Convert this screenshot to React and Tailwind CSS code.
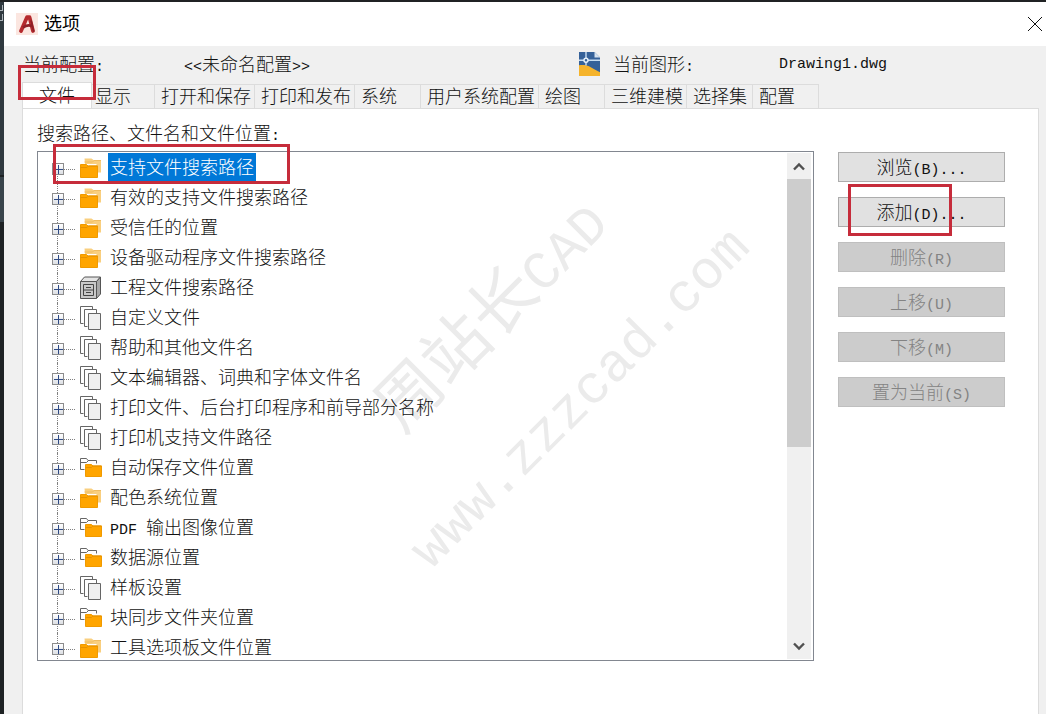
import React from 'react';

const TABS = ['显示', '打开和保存', '打印和发布', '系统', '用户系统配置', '绘图', '三维建模', '选择集', '配置'];

const TREE_ITEMS = [
  { label: '支持文件搜索路径', icon: 'folders', selected: true },
  { label: '有效的支持文件搜索路径', icon: 'folders' },
  { label: '受信任的位置', icon: 'folders' },
  { label: '设备驱动程序文件搜索路径', icon: 'folders' },
  { label: '工程文件搜索路径', icon: 'cabinet' },
  { label: '自定义文件', icon: 'pages' },
  { label: '帮助和其他文件名', icon: 'pages' },
  { label: '文本编辑器、词典和字体文件名', icon: 'pages' },
  { label: '打印文件、后台打印程序和前导部分名称', icon: 'pages' },
  { label: '打印机支持文件路径', icon: 'pages' },
  { label: '自动保存文件位置', icon: 'folderOutline' },
  { label: '配色系统位置', icon: 'folders' },
  { prefix: 'PDF', label: '输出图像位置', icon: 'folderOutline' },
  { label: '数据源位置', icon: 'folderOutline' },
  { label: '样板设置', icon: 'pages' },
  { label: '块同步文件夹位置', icon: 'folderOutline' },
  { label: '工具选项板文件位置', icon: 'folders' },
];

const ACTIONS = [
  { label: '浏览', suffix: '(B)...' },
  { label: '添加', suffix: '(D)...', marked: true },
  { label: '删除', suffix: '(R)', disabled: true },
  { label: '上移', suffix: '(U)', disabled: true },
  { label: '下移', suffix: '(M)', disabled: true },
  { label: '置为当前', suffix: '(S)', disabled: true },
];

// Half-width characters: two of them take the room of one Chinese character
function Latin({ children }) {
  return <span className="font-['Liberation_Mono',monospace] text-[15px] leading-none whitespace-pre">{children}</span>;
}

function AppLogo() {
  return (
    <svg width="22" height="22" viewBox="0 0 22 22" aria-hidden="true">
      <rect width="22" height="22" fill="#fbe6e0" />
      <path d="M5 18 11 4.200h2.500L17 18" fill="none" stroke="#b52a2e" strokeWidth="3.800" strokeLinejoin="round" strokeLinecap="round" />
      <path d="M7 14.500c3-2.200 6-2.600 9-1.500" fill="none" stroke="#8f1f26" strokeWidth="2.600" />
      <path d="M15.200 8 17.600 18" fill="none" stroke="#8f1f26" strokeWidth="1.600" strokeLinecap="round" />
    </svg>
  );
}

function DwgLogo() {
  return (
    <svg width="22" height="24" viewBox="0 0 22 24" aria-hidden="true">
      <path d="M0 0h15.500L21 5.500V24H0z" fill="#356199" />
      <path d="M15.500 0v5.500H21z" fill="#d5e2ef" />
      <path d="M0 13.200c3.500-.4 7-.4 10 1 3.500 1.800 7 4 11 6V24H0z" fill="#f5b32b" />
      <path d="M0 8.200h21M7 0v13.500" stroke="#c9def2" strokeWidth="1.400" />
      <circle cx="7" cy="8.200" r="2" fill="#356199" stroke="#e8f2fb" strokeWidth="1.400" />
    </svg>
  );
}

function TreeIcon({ type }) {
  return (
    <svg className="mt-[3px] shrink-0" width="22" height="24" viewBox="0 0 22 24" aria-hidden="true">
      {type === 'folders' && (
        <>
          <path d="M4.500 2.500h7l2 1.500H21v12.500h-4.500V8H5z" fill="#f9cf7f" />
          <path d="M4.500 6h8l1.500-1.500h7" fill="none" stroke="#f0bd62" />
          <path d="M.5 8.500h6L8 10h9.500v11.500H.5z" fill="#ffa500" stroke="#f09a00" />
          <path d="M.5 11.500H7L8.500 10h9" fill="none" stroke="#e69200" />
        </>
      )}
      {type === 'cabinet' && (
        <>
          <path d="M.5 5.500 4.500 1h16l-4 4.500z" fill="#e4e4e4" stroke="#555" />
          <path d="m16.500 5.500 4-4.500v17l-4 4.500z" fill="#a8a8a8" stroke="#555" />
          <path d="M.5 5.500h16v17H.5z" fill="#c9c9c9" stroke="#555" />
          <path d="M3.500 8.500h10v11h-10zM3.500 14h10M6 11.500h5M6 16.500h5" fill="none" stroke="#444" />
        </>
      )}
      {type === 'pages' && (
        <>
          <path d="M3.500 17.500h-3V.5h12v3" fill="none" stroke="#666" />
          <path d="M7.500 20.500h-3v-17h12v4" fill="none" stroke="#666" />
          <path d="M8.500 7.500h12v16h-12z" fill="#f0f0f0" stroke="#666" />
        </>
      )}
      {type === 'folderOutline' && (
        <>
          <path d="M4.500 13.500h-4V2.500h6l1.500 2h8.500v3M.5 6.500h6l2-2" fill="none" stroke="#666" />
          <path d="M5.500 8.500h6L13 10h8.500v10.500h-16z" fill="#ffa500" stroke="#f09a00" />
          <path d="M5.500 11.500h6L13 10h8.500" fill="none" stroke="#e69200" />
        </>
      )}
    </svg>
  );
}

function Chevron({ down }) {
  return (
    <svg width="12" height="9" viewBox="0 0 12 9" aria-hidden="true">
      <path d={down ? 'm1 1.500 5 5 5-5' : 'm1 7.500 5-5 5 5'} fill="none" stroke="#505050" strokeWidth="2.400" />
    </svg>
  );
}

function Marker({ className }) {
  return <span className={`absolute z-10 border-[3px] border-[#c62c3b] pointer-events-none ${className}`} />;
}

function TreeRow({ item }) {
  return (
    <li className="group relative flex h-[30px] items-start pl-[13px]">
      <span className="absolute left-[18px] top-0 h-full border-l border-dotted border-[#808080] group-first:top-4 group-first:h-[14px]" />
      <button
        type="button"
        aria-label={`展开 ${item.label}`}
        className="relative mt-[10px] flex size-3 shrink-0 items-center justify-center border border-[#8c8c8c] bg-linear-to-b from-white to-[#dcdfe4]"
      >
        <svg width="10" height="10" viewBox="0 0 10 10" aria-hidden="true">
          <path d="M1 5.500h9M5.500 1v9" stroke="#2f4b85" />
        </svg>
      </button>
      <span className="mt-4 mr-[5px] w-[11px] border-t border-dotted border-[#808080]" />
      <TreeIcon type={item.icon} />
      <span className={`ml-1.5 h-7 px-0.5 leading-[26px] whitespace-nowrap ${item.selected ? 'bg-[#0078d7] text-white' : ''}`}>
        {item.prefix && <Latin>{item.prefix} </Latin>}
        {item.label}
      </span>
    </li>
  );
}

function Watermark() {
  return (
    <div className="pointer-events-none absolute inset-0 overflow-hidden font-normal whitespace-nowrap text-[#ebebeb]" aria-hidden="true">
      <div className="absolute left-[347px] top-[228px] origin-left -rotate-45 text-[66px] leading-none">
        周站长<span className="font-['Liberation_Mono',monospace] text-[54px] leading-none">CAD</span>
      </div>
      <div className="absolute left-[383px] top-[381px] origin-left -rotate-45 font-['Liberation_Mono',monospace] text-[54px] leading-none">
        www.zzzcad.com
      </div>
    </div>
  );
}

function FileTree() {
  return (
    <div className="relative flex min-h-0 flex-1 border border-[#828790] p-px">
      <Watermark />
      <ul className="relative min-w-0 flex-1 overflow-hidden">
        {TREE_ITEMS.map((item) => (
          <TreeRow key={item.label} item={item} />
        ))}
      </ul>
      <div className="relative mr-px flex w-6 flex-col bg-[#f0f0f0]">
        <button type="button" aria-label="向上滚动" className="flex h-[26px] shrink-0 items-center justify-center">
          <Chevron />
        </button>
        <div className="min-h-0 flex-1">
          <div className="h-[59%] bg-[#cdcdcd]" />
        </div>
        <button type="button" aria-label="向下滚动" className="flex h-[26px] shrink-0 items-center justify-center">
          <Chevron down />
        </button>
      </div>
      <Marker className="-top-2 left-[15px] h-10 w-[237px]" />
    </div>
  );
}

// The drawing window that shows along the left edge of the dialog
function BackdropStrip() {
  return (
    <div className="flex w-1 shrink-0 flex-col bg-[#1e2224]">
      <div className="h-[173px] bg-[#2f393f]">
        <svg width="4" height="24" viewBox="0 0 4 24" aria-hidden="true">
          <path d="M0 8.500h3M2.500 3v6M0 18.500h3M2.500 12v7" fill="none" stroke="#aab2b8" />
        </svg>
      </div>
      <div className="h-[47px] border-t-2 border-[#1e2224] bg-[#39444b]" />
    </div>
  );
}

export default function App() {
  return (
    <div className="flex h-screen flex-col bg-[#202224] pt-0.5 font-['Noto_Sans_CJK_SC',sans-serif] text-[18px] font-light text-[#111]">
      <div className="flex min-h-0 flex-1">
        <BackdropStrip />
        <div className="flex min-w-0 flex-1 flex-col bg-[#f0f0f0]">
          <header className="flex h-11 shrink-0 items-center bg-white pl-3">
            <AppLogo />
            <h1 className="ml-1.5 flex-1 pb-[3px] font-normal text-black">选项</h1>
            <button type="button" aria-label="关闭" className="mr-[3px]">
              <svg width="16" height="16" viewBox="0 0 16 16" aria-hidden="true">
                <path d="m1 1 14 14M15 1 1 15" stroke="#111" />
              </svg>
            </button>
          </header>

          <div className="flex h-9 shrink-0 items-center pl-[19px] leading-8">
            <span className="w-[161px] pb-0.5">当前配置<Latin>:</Latin></span>
            <span className="w-[395px] pb-[3px]"><Latin>{'<<'}</Latin>未命名配置<Latin>{'>>'}</Latin></span>
            <DwgLogo />
            <span className="ml-3 w-[166px] pb-[3px]">当前图形<Latin>:</Latin></span>
            <Latin>Drawing1.dwg</Latin>
          </div>

          <div role="tablist" className="relative z-10 ml-[18px] flex h-[26px] shrink-0 items-end">
            <button type="button" role="tab" aria-selected="true" className="relative z-10 -mr-[3px] h-full w-[70px] border-x border-t border-[#dcdcdc] bg-white pb-1 leading-5">
              文件
            </button>
            {TABS.map((tab) => (
              <button
                key={tab}
                type="button"
                role="tab"
                aria-selected="false"
                className="h-6 min-w-[66px] border-t border-r border-[#dcdcdc] pr-[3px] pb-1 pl-1.5 text-left leading-5 whitespace-nowrap"
              >
                {tab}
              </button>
            ))}
            <Marker className="-top-[17px] -left-1 h-[35px] w-[78px]" />
          </div>

          <main className="mr-[7px] ml-[18px] flex min-h-0 flex-1 gap-6 border-x border-t border-[#dcdcdc] bg-white pr-[33px] pb-[53px] pl-3.5">
            <section className="flex min-w-0 flex-1 flex-col">
              <h2 className="h-[42px] shrink-0 pt-2 leading-[30px]">搜索路径、文件名和文件位置<Latin>:</Latin></h2>
              <FileTree />
            </section>
            <div className="mt-[43px] flex w-[167px] shrink-0 flex-col gap-[15px]">
              {ACTIONS.map((action) => (
                <div key={action.label} className="relative">
                  <button
                    type="button"
                    disabled={action.disabled}
                    className="h-[30px] w-full border border-[#adadad] bg-[#e1e1e1] pb-0.5 leading-6 disabled:border-[#bfbfbf] disabled:bg-[#cccccc] disabled:text-[#838383]"
                  >
                    {action.label}<Latin>{action.suffix}</Latin>
                  </button>
                  {action.marked && <Marker className="-top-[13px] left-2.5 h-[52px] w-[104px]" />}
                </div>
              ))}
            </div>
          </main>
        </div>
      </div>
    </div>
  );
}
